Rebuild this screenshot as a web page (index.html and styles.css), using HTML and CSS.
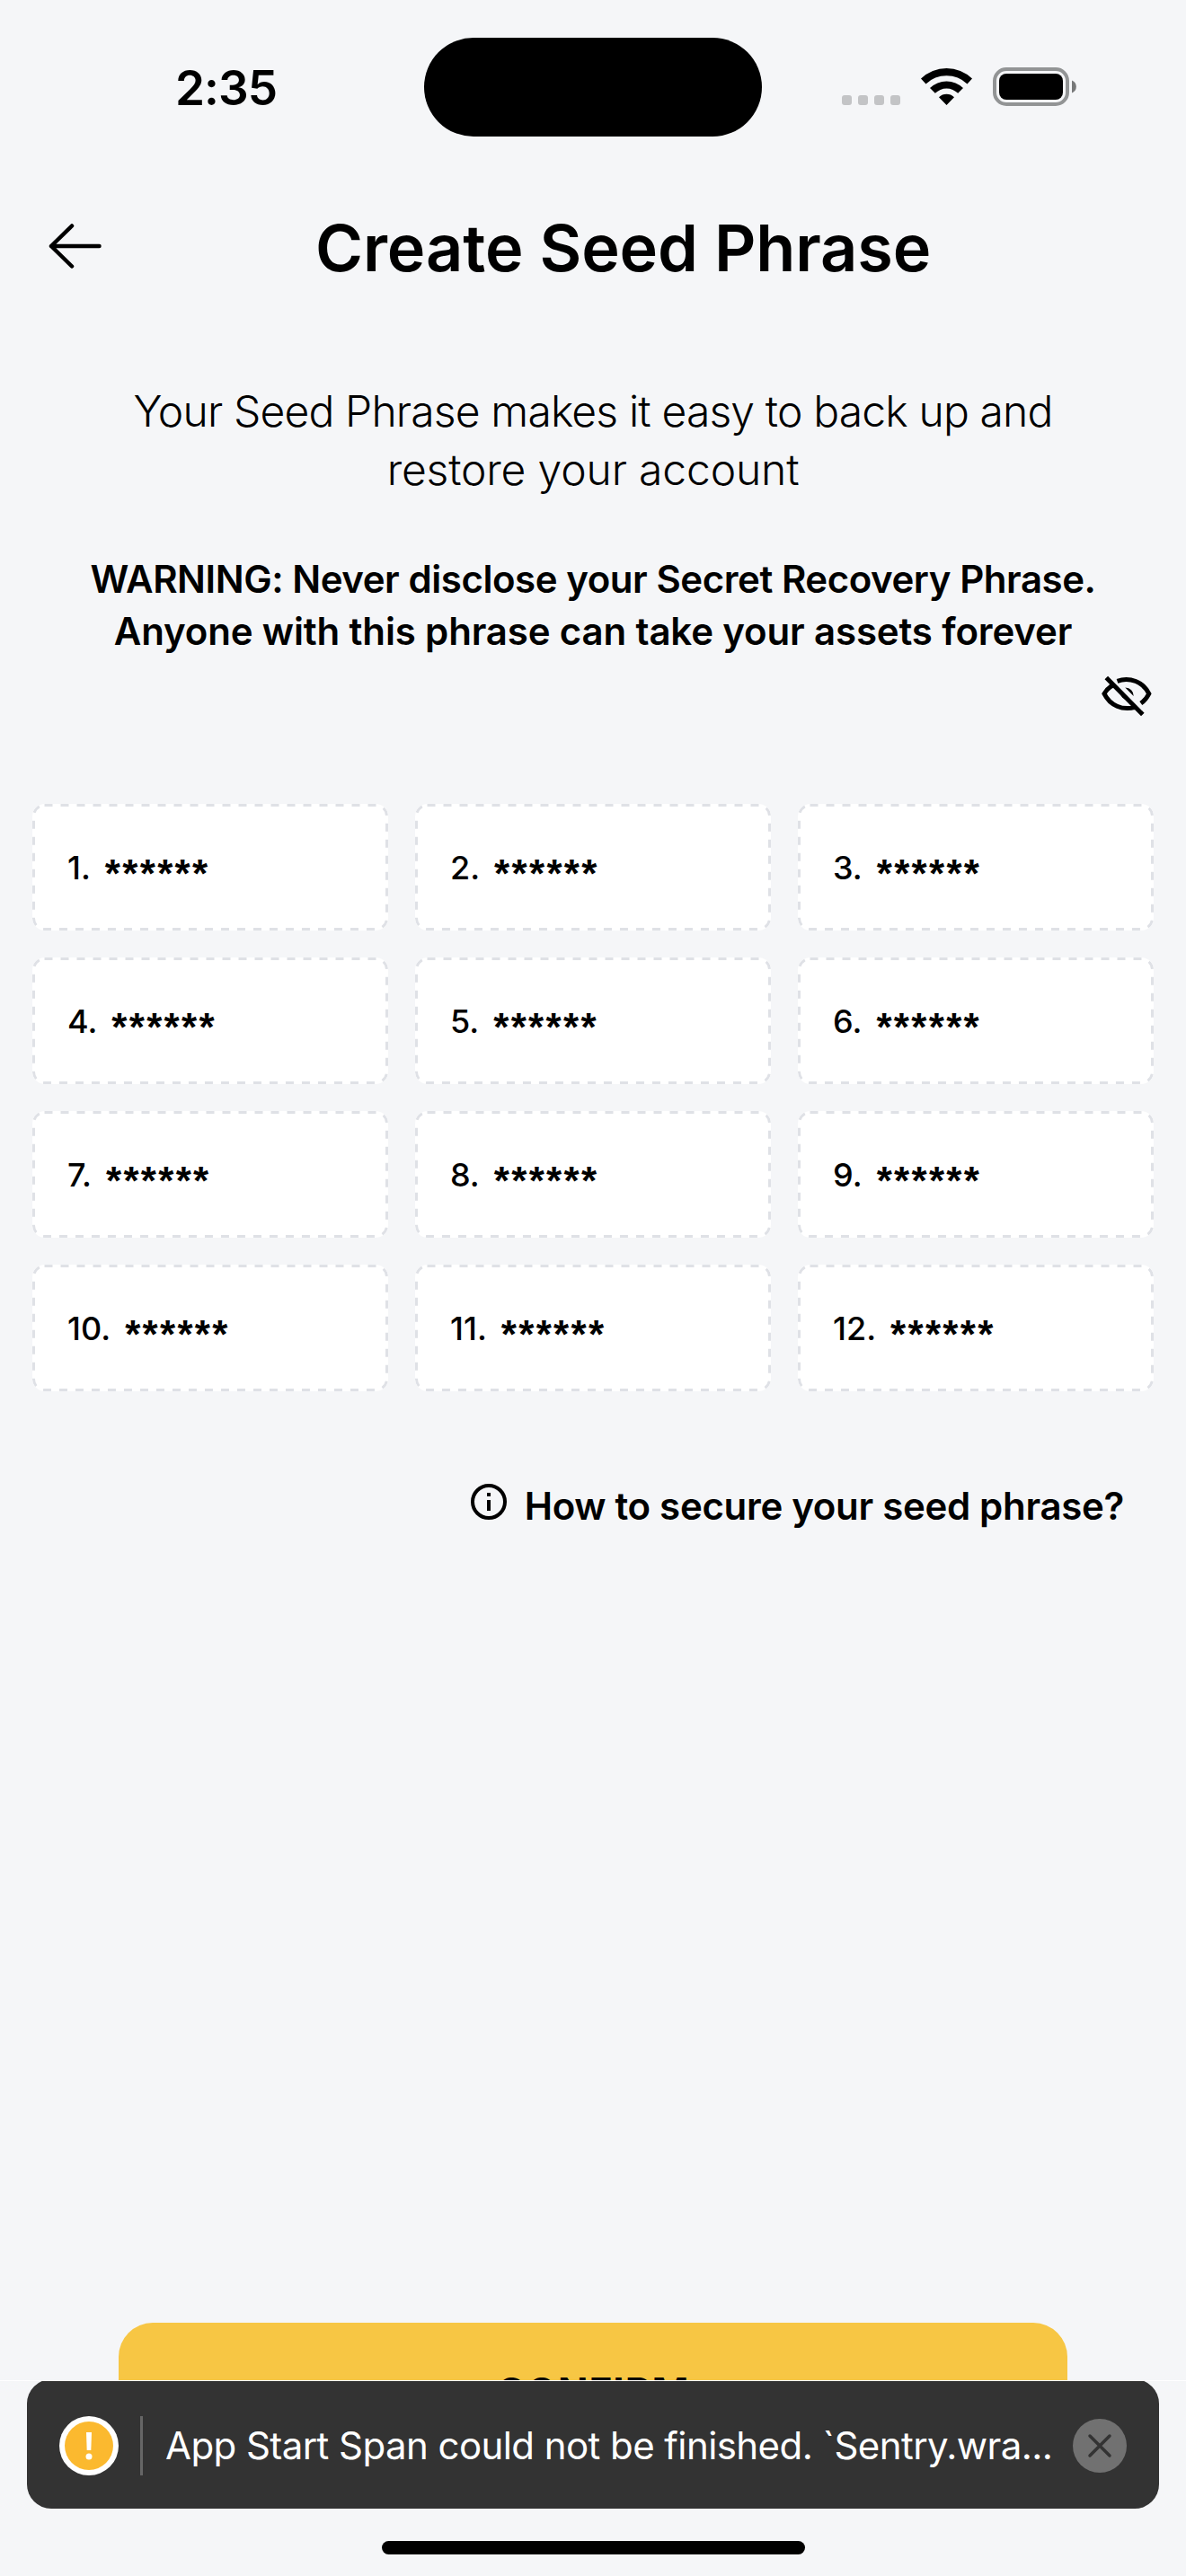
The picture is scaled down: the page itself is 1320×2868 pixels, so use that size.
FILE: index.html
```html
<!DOCTYPE html>
<html lang="en">
<head>
<meta charset="utf-8">
<title>Create Seed Phrase</title>
<link rel="stylesheet" href="styles.css">
</head>
<body>
<div class="screen">
  <div class="status">
    <div class="time">2:35</div>
    <div class="island"></div>
    <svg class="signals" width="264" height="44" viewBox="936 75 264 44">
      <g fill="#c3c4c6"><rect x="937" y="106" width="11" height="11" rx="3"/><rect x="955" y="106" width="11" height="11" rx="3"/><rect x="973" y="106" width="11" height="11" rx="3"/><rect x="991" y="106" width="11" height="11" rx="3"/></g>
      <path d="M1025 87.5a41 41 0 0 1 57 0l-5.500 6a33 33 0 0 0-46 0zM1035 98a26.500 26.500 0 0 1 37 0l-5.800 5.800a18 18 0 0 0-25.400 0zM1045 108.200a12.500 12.500 0 0 1 17 0l-8.500 8.800z"/>
      <rect x="1107" y="77" width="81" height="39" rx="13" fill="none" stroke="#929495" stroke-width="4"/>
      <rect x="1112" y="82" width="71" height="29" rx="8"/>
      <path d="M1193 89.500a7.500 7.500 0 0 1 0 14z" fill="#777879"/>
    </svg>
  </div>
  <header class="header">
    <svg class="back" width="60" height="52" viewBox="0 0 60 52" fill="none" stroke="#000" stroke-width="4.500" stroke-linecap="round" stroke-linejoin="round"><path d="M56.500 26H3M26 3.500L3 26l23 22.500"/></svg>
    <h1 class="title">Create Seed Phrase</h1>
  </header>
  <p class="lead"><span class="lead-a">Your Seed Phrase makes it easy to back up and</span><br><span class="lead-b">restore your account</span></p>
  <p class="warning"><span class="warn-a">WARNING: Never disclose your Secret Recovery Phrase.</span><br><span class="warn-b">Anyone with this phrase can take your assets forever</span></p>
  <div class="reveal">
    <svg width="58" height="48" viewBox="1225 751 58 48" fill="none" stroke="#000" stroke-width="5"><path d="M1231.300 754.500l40.500 41M1243.500 758.300c14-5 29 1 35.300 14-2.300 4.500-5.200 8-9 10.800M1238.500 763c-4.500 2.500-7.500 5.500-9.500 9.300 6.500 13 20 19 34.500 15"/><path stroke="none" fill="#000" d="M1252.300 765.500a9.200 9.200 0 0 1 9.400 9.600zM1246.500 769.500l9.500 9.900a9.200 9.200 0 0 1-9.500-9.900z"/></svg>
  </div>
  <div class="words">
    <div class="word"><span class="num">1.</span><span class="mask">******</span></div>
    <div class="word"><span class="num">2.</span><span class="mask">******</span></div>
    <div class="word"><span class="num">3.</span><span class="mask">******</span></div>
    <div class="word"><span class="num">4.</span><span class="mask">******</span></div>
    <div class="word"><span class="num">5.</span><span class="mask">******</span></div>
    <div class="word"><span class="num">6.</span><span class="mask">******</span></div>
    <div class="word"><span class="num">7.</span><span class="mask">******</span></div>
    <div class="word"><span class="num">8.</span><span class="mask">******</span></div>
    <div class="word"><span class="num">9.</span><span class="mask">******</span></div>
    <div class="word"><span class="num">10.</span><span class="mask">******</span></div>
    <div class="word"><span class="num">11.</span><span class="mask">******</span></div>
    <div class="word"><span class="num">12.</span><span class="mask">******</span></div>
  </div>
  <div class="help">
    <svg class="info" width="40" height="40" viewBox="0 0 40 40" fill="none" stroke="#000" stroke-width="4"><circle cx="20" cy="20" r="18"/><path d="M20 18v12M20 10v4"/></svg>
    <span class="help-text">How to secure your seed phrase?</span>
  </div>
  <div class="confirm">CONFIRM</div>
  <div class="toast-area">
    <div class="toast">
      <svg class="alert" width="66" height="66" viewBox="0 0 66 66"><circle cx="33" cy="33" r="33" fill="#fff"/><circle cx="33" cy="33" r="27" fill="#fbb92f"/><path d="M30 18h6l-.7 20h-4.600z" fill="#fff"/><circle cx="33" cy="45" r="3.500" fill="#fff"/></svg>
      <div class="divider"></div>
      <div class="message">App Start Span could not be finished. `Sentry.wra...</div>
      <svg class="close" width="60" height="60" viewBox="0 0 60 60"><circle cx="30" cy="30" r="30" fill="#717171"/><path d="M19 19l22 22M41 19L19 41" stroke="#333" stroke-width="3.500" stroke-linecap="round"/></svg>
    </div>
    <div class="home"></div>
  </div>
</div>
</body>
</html>
```
FILE: styles.css
```css
body { margin: 0; background: #f5f6f8; color: #000; font-family: Inter, "Liberation Sans", sans-serif; }
svg { display: block; flex: none; }
h1, p { margin: 0; font-weight: 400; }
.screen { width: 1320px; height: 2868px; display: flex; flex-direction: column; overflow: hidden; }

.status { height: 153px; padding-top: 42px; box-sizing: border-box; display: grid; grid-template-columns: 195px 277px 464px 384px; flex: none; }
.time { grid-column: 2; font-size: 53px; line-height: 64px; font-weight: 600; letter-spacing: -1px; padding-top: 24px; height: 64px; }
.island { width: 376px; height: 110px; border-radius: 55px; background: #000; }
.signals { margin-top: 33px; }

.header { height: 93px; margin-top: 77px; display: flex; flex: none; padding-left: 54px; }
.back { margin-top: 18px; }
.title { font-size: 72px; line-height: 92px; font-weight: 600; margin-left: 237px; white-space: nowrap; letter-spacing: -0.1px; }

.lead { margin-top: 102px; font-size: 48px; line-height: 65px; font-weight: 300; text-align: center; white-space: nowrap; flex: none; }
.lead-a { letter-spacing: -0.84px; }
.lead-b { letter-spacing: -0.15px; }
.warning { margin-top: 61px; font-size: 42px; line-height: 58px; font-weight: 600; text-align: center; white-space: nowrap; flex: none; }
.warn-a { letter-spacing: -0.45px; }
.warn-b { letter-spacing: -0.15px; }
.reveal { height: 48px; margin-top: 19px; padding-right: 37px; display: flex; justify-content: flex-end; flex: none; }

.words { margin: 96px 36px 0; display: grid; grid-template-columns: repeat(3, 396px); grid-auto-rows: 141px; gap: 30px; flex: none; }
.word { display: flex; align-items: center; padding-left: 39px; border-radius: 14px; background: #fff url("data:image/svg+xml,%3Csvg xmlns='http://www.w3.org/2000/svg' width='396' height='141'%3E%3Crect x='1.5' y='1.5' width='393' height='138' rx='12' fill='none' stroke='%23dfe1e6' stroke-width='3' stroke-dasharray='9 9'/%3E%3C/svg%3E"); }
.num { font-size: 36px; font-weight: 500; }
.mask { font-family: "Liberation Sans", sans-serif; font-weight: 700; font-size: 44px; letter-spacing: 2.3px; margin-left: 16px; padding-top: 15px; }

.help { margin-top: 98px; height: 60px; padding-right: 69px; display: flex; justify-content: flex-end; flex: none; }
.info { margin-top: 5px; }
.help-text { font-size: 42px; line-height: 60px; font-weight: 600; letter-spacing: -0.31px; margin-left: 20px; white-space: nowrap; }

.confirm { width: 1056px; height: 150px; margin: 879px auto 0; border-radius: 38px; background: #f7c644; font-size: 44px; line-height: 154px; font-weight: 700; letter-spacing: 1px; text-align: center; flex: none; }
.toast-area { height: 218px; margin-top: -86px; background: #f5f6f8; border-top: 1px solid #fff; box-sizing: border-box; overflow: hidden; flex: none; position: relative; }
.toast { width: 1260px; height: 144px; margin: -2px auto 0; border-radius: 27px; background: #333; display: flex; align-items: center; padding: 3px 36px 0; box-sizing: border-box; }
.divider { width: 3px; height: 66px; background: #666; margin-left: 24px; }
.message { color: #fff; font-size: 42px; line-height: 60px; letter-spacing: -0.57px; margin-left: 25px; width: 1010px; white-space: nowrap; }
.home { width: 471px; height: 15px; margin: 36px auto 0; border-radius: 8px; background: #000; }
```
